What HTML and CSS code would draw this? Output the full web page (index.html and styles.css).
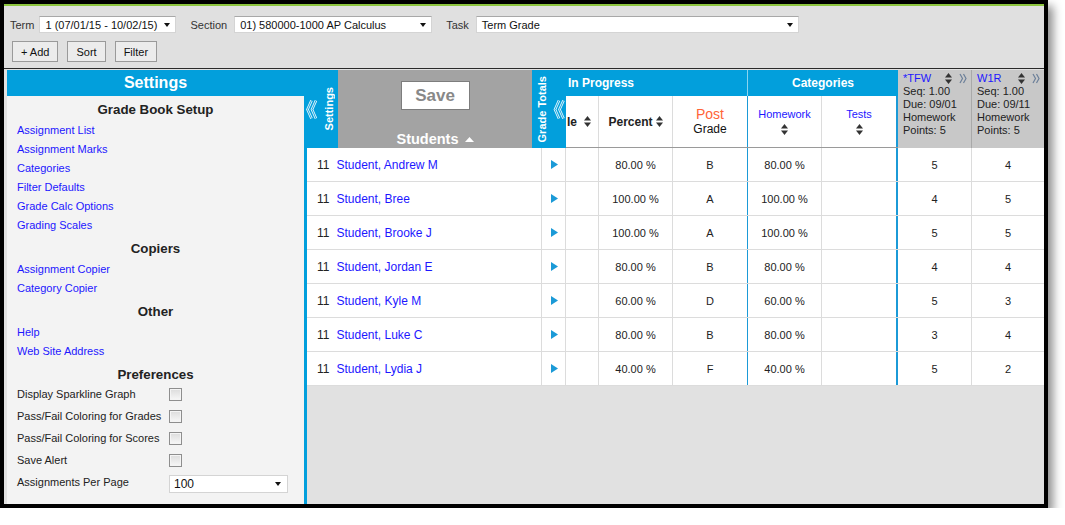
FILE: index.html
```html
<!DOCTYPE html>
<html>
<head>
<meta charset="utf-8">
<title>Grade Book</title>
<link rel="stylesheet" href="styles.css">
</head>
<body>
<div class="frame">
  <div class="toolbar">
    <div class="tb-row">
      <span class="tb-label">Term</span>
      <div class="sel sel-term"><span>1 (07/01/15 - 10/02/15)</span><i class="caret"></i></div>
      <span class="tb-label lbl-wide">Section</span>
      <div class="sel sel-section"><span>01) 580000-1000 AP Calculus</span><i class="caret"></i></div>
      <span class="tb-label lbl-wide">Task</span>
      <div class="sel sel-task"><span>Term Grade</span><i class="caret"></i></div>
    </div>
    <div class="tb-row tb-buttons">
      <button class="btn">+ Add</button>
      <button class="btn">Sort</button>
      <button class="btn">Filter</button>
    </div>
  </div>

  <div class="main">
    <aside class="settings">
      <div class="settings-title">Settings</div>
      <div class="settings-body">
        <div class="sec-title sec-first">Grade Book Setup</div>
        <a class="s-link">Assignment List</a>
        <a class="s-link">Assignment Marks</a>
        <a class="s-link">Categories</a>
        <a class="s-link">Filter Defaults</a>
        <a class="s-link">Grade Calc Options</a>
        <a class="s-link">Grading Scales</a>
        <div class="sec-title">Copiers</div>
        <a class="s-link">Assignment Copier</a>
        <a class="s-link">Category Copier</a>
        <div class="sec-title">Other</div>
        <a class="s-link">Help</a>
        <a class="s-link">Web Site Address</a>
        <div class="sec-title">Preferences</div>
        <div class="prefs">
          <div class="pref"><span class="pref-label">Display Sparkline Graph</span><span class="chk"></span></div>
          <div class="pref"><span class="pref-label">Pass/Fail Coloring for Grades</span><span class="chk"></span></div>
          <div class="pref"><span class="pref-label">Pass/Fail Coloring for Scores</span><span class="chk"></span></div>
          <div class="pref"><span class="pref-label">Save Alert</span><span class="chk"></span></div>
          <div class="pref"><span class="pref-label">Assignments Per Page</span><div class="sel sel-pp"><span>100</span><i class="caret"></i></div></div>
        </div>
      </div>
    </aside>

    <section class="gb">
      <div class="gb-head">
        <div class="vtab vtab-settings">
          <svg class="chev" width="11" height="21" viewBox="0 0 11 21"><path d="M5.5 1.5 L1.5 10.5 L5.5 19.5 M10 1.5 L6 10.5 L10 19.5" fill="none" stroke="#e6f6fd" stroke-width="2.6" stroke-linejoin="miter"/><path d="M5.5 1.5 L1.5 10.5 L5.5 19.5 M10 1.5 L6 10.5 L10 19.5" fill="none" stroke="#049fdc" stroke-width="0.9"/></svg>
          <span class="vtext">Settings</span>
        </div>
        <div class="students-head">
          <div class="save">Save</div>
          <div class="students-title">Students <svg width="9" height="5" viewBox="0 0 9 5"><polygon points="0,5 4.5,0 9,5" fill="#fff"/></svg></div>
        </div>
        <div class="vtab vtab-totals">
          <span class="vtext">Grade Totals</span>
          <svg class="chev" width="12" height="21" viewBox="0 0 12 21"><path d="M6 1.5 L2 10.5 L6 19.5 M10.5 1.5 L6.5 10.5 L10.5 19.5" fill="none" stroke="#e6f6fd" stroke-width="2.6"/><path d="M6 1.5 L2 10.5 L6 19.5 M10.5 1.5 L6.5 10.5 L10.5 19.5" fill="none" stroke="#049fdc" stroke-width="0.9"/></svg>
        </div>
        <div class="grp grp-prog">
          <div class="band">In Progress</div>
          <div class="subs">
            <div class="sh sh-le">le<svg class="sort" width="7" height="11" viewBox="0 0 7 11"><polygon points="0,4.5 3.5,0 7,4.5" fill="#333"/><polygon points="0,6.5 7,6.5 3.5,11" fill="#333"/></svg></div>
            <div class="sh sh-pct">Percent<svg class="sort" width="7" height="11" viewBox="0 0 7 11"><polygon points="0,4.5 3.5,0 7,4.5" fill="#333"/><polygon points="0,6.5 7,6.5 3.5,11" fill="#333"/></svg></div>
            <div class="sh sh-post"><span class="post">Post</span><span class="grade">Grade</span></div>
          </div>
        </div>
        <div class="grp grp-cat">
          <div class="band">Categories</div>
          <div class="subs">
            <div class="sh sh-cat sh-hw"><span class="cat-link">Homework</span><svg class="sort" width="7" height="11" viewBox="0 0 7 11"><polygon points="0,4.5 3.5,0 7,4.5" fill="#333"/><polygon points="0,6.5 7,6.5 3.5,11" fill="#333"/></svg></div>
            <div class="sh sh-cat sh-tests"><span class="cat-link">Tests</span><svg class="sort" width="7" height="11" viewBox="0 0 7 11"><polygon points="0,4.5 3.5,0 7,4.5" fill="#333"/><polygon points="0,6.5 7,6.5 3.5,11" fill="#333"/></svg></div>
          </div>
        </div>
        <div class="asg asg-tfw">
          <div class="asg-top"><span class="asg-name">*TFW</span><svg class="sort" width="7" height="11" viewBox="0 0 7 11"><polygon points="0,4.5 3.5,0 7,4.5" fill="#333"/><polygon points="0,6.5 7,6.5 3.5,11" fill="#333"/></svg><svg class="asg-chev" width="8" height="11" viewBox="0 0 8 11"><path d="M1 1 L3.5 5.5 L1 10 M4.5 1 L7 5.5 L4.5 10" fill="none" stroke="#6b7f99" stroke-width="1.2"/></svg></div>
          <div>Seq: 1.00</div>
          <div>Due: 09/01</div>
          <div>Homework</div>
          <div>Points: 5</div>
        </div>
        <div class="asg asg-w1r">
          <div class="asg-top"><span class="asg-name">W1R</span><svg class="sort" width="7" height="11" viewBox="0 0 7 11"><polygon points="0,4.5 3.5,0 7,4.5" fill="#333"/><polygon points="0,6.5 7,6.5 3.5,11" fill="#333"/></svg><svg class="asg-chev" width="8" height="11" viewBox="0 0 8 11"><path d="M1 1 L3.5 5.5 L1 10 M4.5 1 L7 5.5 L4.5 10" fill="none" stroke="#6b7f99" stroke-width="1.2"/></svg></div>
          <div>Seq: 1.00</div>
          <div>Due: 09/11</div>
          <div>Homework</div>
          <div>Points: 5</div>
        </div>
      </div>

      <div class="gb-body">
        <div class="row"><div class="c c-name"><span class="num">11</span><a class="stu">Student, Andrew M</a></div><div class="c c-arrow"><svg width="7" height="9" viewBox="0 0 7 9"><polygon points="0,0 7,4.5 0,9" fill="#1b9ad7"/></svg></div><div class="c c-le"></div><div class="c c-pct">80.00 %</div><div class="c c-post">B</div><div class="c c-hw">80.00 %</div><div class="c c-tests"></div><div class="c c-tfw">5</div><div class="c c-w1r">4</div></div>
        <div class="row"><div class="c c-name"><span class="num">11</span><a class="stu">Student, Bree</a></div><div class="c c-arrow"><svg width="7" height="9" viewBox="0 0 7 9"><polygon points="0,0 7,4.5 0,9" fill="#1b9ad7"/></svg></div><div class="c c-le"></div><div class="c c-pct">100.00 %</div><div class="c c-post">A</div><div class="c c-hw">100.00 %</div><div class="c c-tests"></div><div class="c c-tfw">4</div><div class="c c-w1r">5</div></div>
        <div class="row"><div class="c c-name"><span class="num">11</span><a class="stu">Student, Brooke J</a></div><div class="c c-arrow"><svg width="7" height="9" viewBox="0 0 7 9"><polygon points="0,0 7,4.5 0,9" fill="#1b9ad7"/></svg></div><div class="c c-le"></div><div class="c c-pct">100.00 %</div><div class="c c-post">A</div><div class="c c-hw">100.00 %</div><div class="c c-tests"></div><div class="c c-tfw">5</div><div class="c c-w1r">5</div></div>
        <div class="row"><div class="c c-name"><span class="num">11</span><a class="stu">Student, Jordan E</a></div><div class="c c-arrow"><svg width="7" height="9" viewBox="0 0 7 9"><polygon points="0,0 7,4.5 0,9" fill="#1b9ad7"/></svg></div><div class="c c-le"></div><div class="c c-pct">80.00 %</div><div class="c c-post">B</div><div class="c c-hw">80.00 %</div><div class="c c-tests"></div><div class="c c-tfw">4</div><div class="c c-w1r">4</div></div>
        <div class="row"><div class="c c-name"><span class="num">11</span><a class="stu">Student, Kyle M</a></div><div class="c c-arrow"><svg width="7" height="9" viewBox="0 0 7 9"><polygon points="0,0 7,4.5 0,9" fill="#1b9ad7"/></svg></div><div class="c c-le"></div><div class="c c-pct">60.00 %</div><div class="c c-post">D</div><div class="c c-hw">60.00 %</div><div class="c c-tests"></div><div class="c c-tfw">5</div><div class="c c-w1r">3</div></div>
        <div class="row"><div class="c c-name"><span class="num">11</span><a class="stu">Student, Luke C</a></div><div class="c c-arrow"><svg width="7" height="9" viewBox="0 0 7 9"><polygon points="0,0 7,4.5 0,9" fill="#1b9ad7"/></svg></div><div class="c c-le"></div><div class="c c-pct">80.00 %</div><div class="c c-post">B</div><div class="c c-hw">80.00 %</div><div class="c c-tests"></div><div class="c c-tfw">3</div><div class="c c-w1r">4</div></div>
        <div class="row"><div class="c c-name"><span class="num">11</span><a class="stu">Student, Lydia J</a></div><div class="c c-arrow"><svg width="7" height="9" viewBox="0 0 7 9"><polygon points="0,0 7,4.5 0,9" fill="#1b9ad7"/></svg></div><div class="c c-le"></div><div class="c c-pct">40.00 %</div><div class="c c-post">F</div><div class="c c-hw">40.00 %</div><div class="c c-tests"></div><div class="c c-tfw">5</div><div class="c c-w1r">2</div></div>
      </div>
    </section>
  </div>
</div>
</body>
</html>
```
FILE: styles.css
```css
* { box-sizing: border-box; }

body {
  margin: 0;
  background: #ffffff;
  font-family: "Liberation Sans", Arial, sans-serif;
  color: #222;
}

.frame {
  width: 1048px;
  height: 508px;
  border: 4px solid #000;
  background: #e1e1e1;
  box-shadow: 5px 6px 9px rgba(0, 0, 0, 0.45);
  display: flex;
  flex-direction: column;
}

/* ---------- toolbar ---------- */
.toolbar {
  height: 65px;
  flex: none;
  border-top: 2px solid #8dc63f;
  border-bottom: 1px solid #2a2a2a;
  background: #e0e0e0;
  padding: 10px 0 0 6px;
}

.tb-row {
  display: flex;
  align-items: center;
  height: 17px;
}

.tb-label {
  font-size: 11px;
  color: #333;
  margin-right: 5px;
}

.lbl-wide { margin-right: 7px; }

.sel {
  display: flex;
  align-items: center;
  justify-content: space-between;
  height: 17px;
  background: #fff;
  border: 1px solid #d4d4d4;
  border-top-color: #a8a8a8;
  font-size: 11px;
  color: #111;
  padding: 0 5px 0 5px;
}

.sel-term { width: 137px; margin-right: 14px; }
.sel-section { width: 198px; margin-right: 14px; }
.sel-task { width: 323px; }

.caret {
  width: 0;
  height: 0;
  border-left: 3.5px solid transparent;
  border-right: 3.5px solid transparent;
  border-top: 4px solid #111;
}

.tb-buttons {
  margin-top: 8px;
  height: 21px;
  padding-left: 2px;
  gap: 9px;
}

.btn {
  height: 21px;
  padding: 0 8px;
  border: 1px solid #9a9a9a;
  background: #ececec;
  font-family: "Liberation Sans", Arial, sans-serif;
  font-size: 11px;
  color: #111;
  border-radius: 0;
}

/* ---------- main ---------- */
.main {
  flex: 1;
  display: flex;
  padding: 1px 0 0 3px;
  min-height: 0;
}

.settings {
  width: 297px;
  flex: none;
  background: #f3f3f3;
  display: flex;
  flex-direction: column;
}

.settings-title {
  height: 26px;
  background: #029fdc;
  color: #fff;
  font-weight: bold;
  font-size: 16px;
  line-height: 26px;
  text-align: center;
}

.settings-body { padding-top: 3px; }

.sec-title {
  margin-top: 3px;
  height: 22px;
  line-height: 22px;
  text-align: center;
  font-weight: bold;
  font-size: 13.3px;
  color: #222;
}

.sec-first { margin-top: 0; }

.s-link {
  display: block;
  height: 19px;
  line-height: 19px;
  padding-left: 10px;
  font-size: 11px;
  color: #1d17ff;
  text-decoration: none;
}

.prefs { margin-top: -3px; }

.pref {
  display: flex;
  align-items: center;
  height: 22px;
}

.pref-label {
  width: 162px;
  padding-left: 10px;
  font-size: 11px;
  color: #222;
}

.chk {
  width: 13px;
  height: 13px;
  border: 1px solid #8e8e8e;
  background: linear-gradient(#dcdcdc, #f7f7f7);
  box-shadow: inset 0 0 0 1px #f4f4f4;
}

.sel-pp {
  width: 119px;
  height: 18px;
  margin-top: 3px;
  font-size: 12px;
  border-color: #d4d4d4;
  padding: 0 6px 0 4px;
}

/* ---------- grade book ---------- */
.gb {
  width: 740px;
  flex: none;
  display: flex;
  flex-direction: column;
}

.gb-head {
  display: flex;
  height: 78px;
  flex: none;
}

.vtab {
  width: 34px;
  flex: none;
  background: #029fdc;
  display: flex;
  align-items: center;
}

.vtab-settings { padding-left: 2px; gap: 6px; }
.vtab-totals { padding-left: 4px; gap: 5px; }

.vtext {
  writing-mode: vertical-rl;
  transform: rotate(180deg);
  color: #fff;
  font-weight: bold;
  font-size: 11px;
  line-height: 12px;
  white-space: nowrap;
}

.chev { flex: none; }

.students-head {
  width: 194px;
  flex: none;
  background: #a3a3a3;
  display: flex;
  flex-direction: column;
  align-items: center;
  justify-content: space-between;
  padding-top: 11px;
}

.save {
  width: 69px;
  height: 29px;
  background: #fff;
  border: 1px solid #7d7d7d;
  color: #888;
  font-weight: bold;
  font-size: 17px;
  line-height: 27px;
  text-align: center;
}

.students-title {
  height: 18px;
  line-height: 18px;
  color: #fff;
  font-weight: bold;
  font-size: 14.5px;
  display: flex;
  align-items: center;
  gap: 6px;
}

.grp {
  display: flex;
  flex-direction: column;
  flex: none;
}

.grp-prog { width: 182px; }
.grp-cat { width: 150px; }

.band {
  height: 26px;
  background: #029fdc;
  color: #fff;
  font-weight: bold;
  font-size: 12px;
  line-height: 26px;
}

.grp-prog .band {
  padding-left: 2px;
  border-right: 1px solid rgba(255, 255, 255, 0.55);
}

.grp-cat .band { text-align: center; }

.subs {
  display: flex;
  height: 52px;
  background: #fff;
  border-bottom: 1px solid #9a9a9a;
}

.sh {
  display: flex;
  align-items: center;
  justify-content: center;
  border-right: 1px solid #dcdcdc;
  font-weight: bold;
  font-size: 12px;
  color: #222;
  gap: 3px;
}

.sh-le { width: 33px; justify-content: flex-start; padding-left: 1px; gap: 7px; }
.sh-pct { width: 74px; }
.sh-post {
  width: 75px;
  flex-direction: column;
  font-weight: normal;
  gap: 0;
  border-right-color: #1b9ad7;
}

.post { color: #ff6438; font-size: 14px; line-height: 15px; }
.grade { font-size: 12px; line-height: 14px; color: #111; }

.sh-cat { flex-direction: column; font-weight: normal; }
.sh-hw { width: 74px; }
.sh-tests { width: 76px; border-right: 2px solid #1b9ad7; }

.cat-link {
  font-size: 11px;
  line-height: 13px;
  color: #1d17ff;
}

.asg {
  flex: none;
  height: 78px;
  background: #c8c8c8;
  padding: 2px 4px 0 5px;
  font-size: 11px;
  line-height: 13px;
  color: #222;
}

.asg-tfw { width: 74px; border-right: 1px solid #a9a9a9; }
.asg-w1r { width: 72px; }

.asg-top {
  display: flex;
  align-items: center;
}

.asg-name { flex: 1; color: #1d17ff; }
.asg-chev { margin-left: 7px; }

.gb-body {
  flex: 1;
  border-left: 3px solid #029fdc;
  background: #e1e1e1;
}

.row {
  display: flex;
  height: 34px;
  background: #fff;
  border-bottom: 1px solid #dcdcdc;
}

.c {
  display: flex;
  align-items: center;
  justify-content: center;
  border-right: 1px solid #dcdcdc;
  font-size: 11px;
  color: #222;
  flex: none;
}

.c-name {
  width: 235px;
  justify-content: flex-start;
  padding-left: 10px;
  font-size: 12px;
}

.num { margin-right: 7px; color: #222; }
.stu { color: #1d17ff; text-decoration: none; }

.c-arrow { width: 24px; padding-left: 1px; }
.c-le { width: 33px; }
.c-pct { width: 74px; }
.c-post { width: 75px; border-right-color: #1b9ad7; }
.c-hw { width: 74px; }
.c-tests { width: 76px; border-right: 2px solid #1b9ad7; }
.c-tfw { width: 74px; }
.c-w1r { width: 72px; border-right: none; }
```
